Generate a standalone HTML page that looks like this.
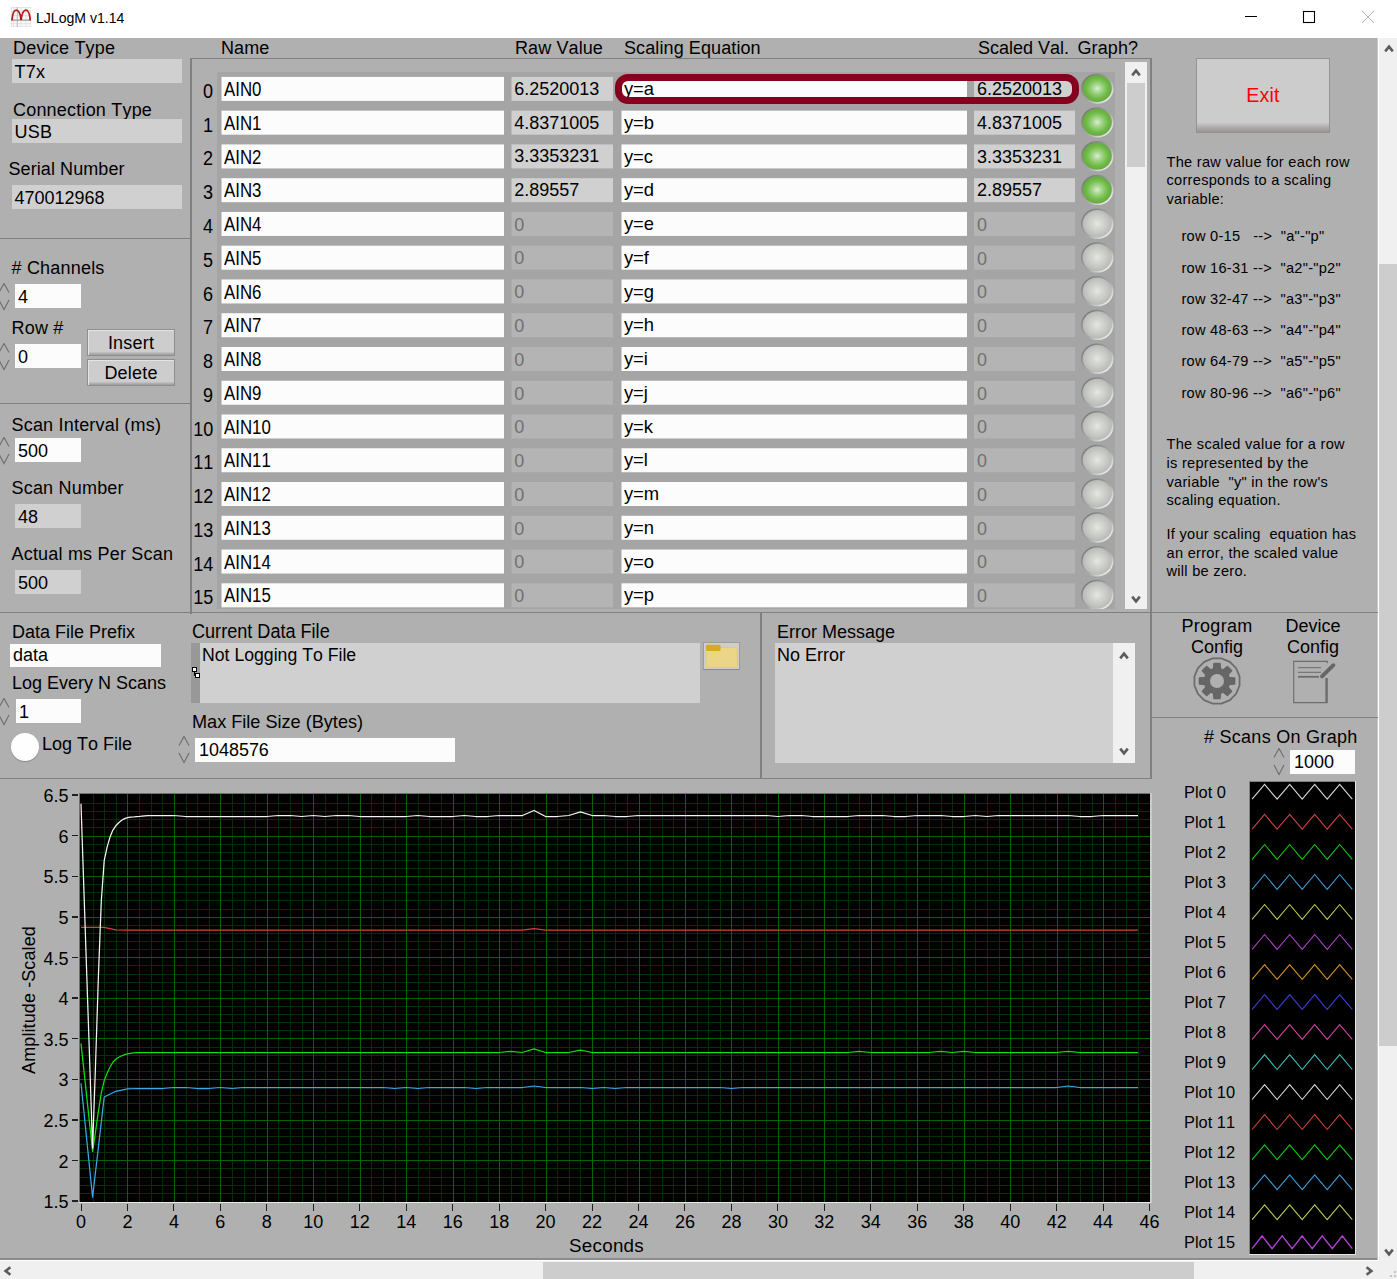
<!DOCTYPE html>
<html><head><meta charset="utf-8"><title>LJLogM v1.14</title>
<style>
html,body{margin:0;padding:0;}
body{font-kerning:none;width:1397px;height:1279px;position:relative;overflow:hidden;background:#f0f0f0;font-family:"Liberation Sans", sans-serif;}
body>div,body>svg{position:absolute;}
.t{position:absolute;}
</style></head><body>
<div style="left:0px;top:0px;width:1397px;height:38px;background:#ffffff;"></div>
<svg style="left:10.9px;top:6.8px" width="20.2" height="20.2" viewBox="0 0 20 20">
<rect x="0" y="0" width="20" height="20" fill="#f7f8f7"/>
<g stroke="#dcdcda" stroke-width="0.7"><path d="M0.4 0V20M2.7 0V20M10 0V20M14.7 0V20M19.6 0V20M0 0.5H20M0 4H20M0 8.5H20M0 16.5H20M0 19.6H20"/></g>
<path d="M6.3 0V20" stroke="#c4c4c2" stroke-width="1.2"/>
<path d="M0.3 13H19.8" stroke="#9c9c9c" stroke-width="1.3"/>
<path d="M0.9 13.2 C1.4 7.5, 3 3.2, 5.2 3.2 C7.4 3.2, 9.3 7.5, 10 12.6 C10.7 7.5, 12.6 3.2, 14.7 3.2 C16.9 3.2, 18.6 7.5, 19.1 13.2" fill="none" stroke="#b81c1c" stroke-width="1.7"/>
<path d="M10 9.5L8.9 12.9H11.1Z" fill="#a40808"/>
</svg>
<div class="t" style="top:10.15px;font-size:15.3px;line-height:15.3px;color:#000;white-space:pre;left:36.3px;transform:scaleX(0.92);transform-origin:0 0;">LJLogM v1.14</div>
<svg style="left:1240px;top:0" width="157" height="38" viewBox="0 0 157 38">
<path d="M5 16.5H17" stroke="#000" stroke-width="1"/>
<rect x="63.5" y="11.5" width="11" height="11" fill="none" stroke="#000" stroke-width="1.1"/>
<path d="M122 11L134 23M134 11L122 23" stroke="#b4b4b4" stroke-width="1"/>
</svg>
<div style="left:0px;top:38px;width:1378px;height:1221px;background:#b0b0b0;"></div>
<div style="left:0px;top:1258px;width:1379px;height:2px;background:#8c8c8c;"></div>
<div style="left:0px;top:1260px;width:1379px;height:1px;background:#ffffff;"></div>
<div style="left:1377px;top:38px;width:1px;height:1222px;background:#c8c8c8;"></div>
<div style="left:1378px;top:38px;width:1px;height:1222px;background:#ffffff;"></div>
<div style="left:1379px;top:38px;width:18px;height:1223px;background:#f0f0f0;"></div>
<div style="left:0px;top:1261px;width:1397px;height:18px;background:#f0f0f0;"></div>
<div style="left:1379px;top:264.3px;width:18px;height:781.5px;background:#cdcdcd;"></div>
<div style="left:543px;top:1262px;width:651px;height:17px;background:#cdcdcd;"></div>
<svg style="left:1381.2px;top:1265.8px" width="17" height="17"><g fill="#c4c4c4"><rect x="13" y="5" width="2" height="2"/><rect x="9" y="9" width="2" height="2"/><rect x="13" y="9" width="2" height="2"/><rect x="5" y="13" width="2" height="2"/><rect x="9" y="13" width="2" height="2"/><rect x="13" y="13" width="2" height="2"/></g></svg>
<div class="t" style="top:38.96px;font-size:18px;line-height:18px;color:#000;white-space:pre;left:13px;letter-spacing:0.200px;">Device Type</div>
<div style="left:12px;top:59px;width:170px;height:24px;background:#d0d0d0;"></div>
<div class="t" style="top:62.96px;font-size:18px;line-height:18px;color:#000;white-space:pre;left:14.5px;letter-spacing:0.200px;">T7x</div>
<div class="t" style="top:101.06px;font-size:18px;line-height:18px;color:#000;white-space:pre;left:13px;letter-spacing:0.200px;">Connection Type</div>
<div style="left:12px;top:119px;width:170px;height:24px;background:#d0d0d0;"></div>
<div class="t" style="top:122.66px;font-size:18px;line-height:18px;color:#000;white-space:pre;left:14.5px;letter-spacing:0.200px;">USB</div>
<div class="t" style="top:160.46px;font-size:18px;line-height:18px;color:#000;white-space:pre;left:8.5px;letter-spacing:0.080px;">Serial Number</div>
<div style="left:12px;top:185px;width:170px;height:24px;background:#d0d0d0;"></div>
<div class="t" style="top:188.76px;font-size:18px;line-height:18px;color:#000;white-space:pre;left:14.5px;">470012968</div>
<div style="left:0px;top:237.9px;width:191px;height:1.5px;background:#808080;"></div>
<div class="t" style="top:259.36px;font-size:18px;line-height:18px;color:#000;white-space:pre;left:11.5px;letter-spacing:0.200px;"># Channels</div>
<svg style="left:-2px;top:283px" width="12" height="28" viewBox="0 0 12 28"><path d="M1 9.4L6.0 0.4L11 9.4M1 17.1L6.0 26.5L11 17.1" fill="none" stroke="#6e6e6e" stroke-width="1.1"/></svg>
<div style="left:15px;top:284px;width:66px;height:24px;background:#fcfcfc;"></div>
<div class="t" style="top:288.36px;font-size:18px;line-height:18px;color:#000;white-space:pre;left:18px;">4</div>
<div class="t" style="top:319.36px;font-size:18px;line-height:18px;color:#000;white-space:pre;left:11.5px;letter-spacing:0.200px;">Row #</div>
<svg style="left:-2px;top:343px" width="12" height="28" viewBox="0 0 12 28"><path d="M1 9.4L6.0 0.4L11 9.4M1 17.1L6.0 26.5L11 17.1" fill="none" stroke="#6e6e6e" stroke-width="1.1"/></svg>
<div style="left:15px;top:344px;width:66px;height:24px;background:#fcfcfc;"></div>
<div class="t" style="top:348.36px;font-size:18px;line-height:18px;color:#000;white-space:pre;left:18px;">0</div>
<div style="left:87px;top:328.5px;width:88px;height:27.5px;box-sizing:border-box;border:1px solid #8e8e8e;background:linear-gradient(#cdcdcd 0%,#cdcdcd 86%,#9a9a9a 100%);box-shadow:inset 1px 1px 0 #e4e4e4;"></div>
<div class="t" style="top:334.36px;font-size:18px;line-height:18px;color:#000;white-space:pre;left:-69.0px;width:400px;text-align:center;letter-spacing:0.200px;">Insert</div>
<div style="left:87px;top:358.8px;width:88px;height:27.3px;box-sizing:border-box;border:1px solid #8e8e8e;background:linear-gradient(#cdcdcd 0%,#cdcdcd 86%,#9a9a9a 100%);box-shadow:inset 1px 1px 0 #e4e4e4;"></div>
<div class="t" style="top:364.36px;font-size:18px;line-height:18px;color:#000;white-space:pre;left:-69.0px;width:400px;text-align:center;letter-spacing:0.200px;">Delete</div>
<div style="left:0px;top:402.9px;width:191px;height:1.5px;background:#808080;"></div>
<div class="t" style="top:416.36px;font-size:18px;line-height:18px;color:#000;white-space:pre;left:11.5px;letter-spacing:0.200px;">Scan Interval (ms)</div>
<svg style="left:-2px;top:437px" width="12" height="28" viewBox="0 0 12 28"><path d="M1 9.4L6.0 0.4L11 9.4M1 17.1L6.0 26.5L11 17.1" fill="none" stroke="#6e6e6e" stroke-width="1.1"/></svg>
<div style="left:15px;top:438px;width:66px;height:24px;background:#fcfcfc;"></div>
<div class="t" style="top:442.36px;font-size:18px;line-height:18px;color:#000;white-space:pre;left:18px;">500</div>
<div class="t" style="top:479.36px;font-size:18px;line-height:18px;color:#000;white-space:pre;left:11.5px;letter-spacing:0.200px;">Scan Number</div>
<div style="left:15px;top:504px;width:66px;height:24px;background:#d0d0d0;"></div>
<div class="t" style="top:508.36px;font-size:18px;line-height:18px;color:#000;white-space:pre;left:18px;">48</div>
<div class="t" style="top:545.36px;font-size:18px;line-height:18px;color:#000;white-space:pre;left:11.5px;letter-spacing:0.200px;">Actual ms Per Scan</div>
<div style="left:15px;top:570px;width:66px;height:24px;background:#d0d0d0;"></div>
<div class="t" style="top:574.36px;font-size:18px;line-height:18px;color:#000;white-space:pre;left:18px;">500</div>
<div class="t" style="top:38.96px;font-size:18px;line-height:18px;color:#000;white-space:pre;left:221px;letter-spacing:0.100px;">Name</div>
<div class="t" style="top:38.96px;font-size:18px;line-height:18px;color:#000;white-space:pre;left:515px;letter-spacing:0.100px;">Raw Value</div>
<div class="t" style="top:38.96px;font-size:18px;line-height:18px;color:#000;white-space:pre;left:624px;letter-spacing:0.100px;">Scaling Equation</div>
<div class="t" style="top:38.96px;font-size:18px;line-height:18px;color:#000;white-space:pre;left:978px;">Scaled Val.</div>
<div class="t" style="top:38.96px;font-size:18px;line-height:18px;color:#000;white-space:pre;left:1077.5px;letter-spacing:0.100px;">Graph?</div>
<div style="left:190.2px;top:58px;width:1.5px;height:556px;background:#808080;"></div>
<div style="left:190.2px;top:57.9px;width:961px;height:1.4px;background:#808080;"></div>
<div style="left:1150px;top:58px;width:1.9px;height:556px;background:#808080;"></div>
<div style="left:217px;top:72px;width:898px;height:540px;background:#a5a5a5;"></div>
<div class="t" style="top:80.97px;font-size:20px;line-height:20px;color:#000;white-space:pre;right:1184px;transform:scaleX(0.9);transform-origin:100% 0;">0</div>
<svg style="left:221px;top:76px" width="283" height="25"><rect x="0.50" y="0.90" width="282.50" height="24.00" fill="#fcfcfc"/></svg>
<div class="t" style="top:80.06px;font-size:19.3px;line-height:19.3px;color:#000;white-space:pre;left:224px;transform:scaleX(0.872);transform-origin:0 0;">AIN0</div>
<svg style="left:511px;top:76px" width="102" height="25"><rect x="0.50" y="0.90" width="101.50" height="24.00" fill="#d0d0d0"/></svg>
<div class="t" style="top:79.76px;font-size:18px;line-height:18px;color:#000;white-space:pre;left:514.3px;">6.2520013</div>
<svg style="left:621px;top:76px" width="346" height="25"><rect x="0.50" y="0.90" width="345.50" height="24.00" fill="#fcfcfc"/></svg>
<div class="t" style="top:80.02px;font-size:18.4px;line-height:18.4px;color:#000;white-space:pre;left:623.9px;">y=a</div>
<svg style="left:974px;top:76px" width="101" height="25"><rect x="0.00" y="0.90" width="101.00" height="24.00" fill="#d0d0d0"/></svg>
<div class="t" style="top:80.06px;font-size:18px;line-height:18px;color:#000;white-space:pre;left:977px;">6.2520013</div>
<div class="t" style="top:114.73px;font-size:20px;line-height:20px;color:#000;white-space:pre;right:1184px;transform:scaleX(0.9);transform-origin:100% 0;">1</div>
<svg style="left:221px;top:110px" width="283" height="25"><rect x="0.50" y="0.66" width="282.50" height="24.00" fill="#fcfcfc"/></svg>
<div class="t" style="top:113.82px;font-size:19.3px;line-height:19.3px;color:#000;white-space:pre;left:224px;transform:scaleX(0.872);transform-origin:0 0;">AIN1</div>
<svg style="left:511px;top:110px" width="102" height="25"><rect x="0.50" y="0.66" width="101.50" height="24.00" fill="#d0d0d0"/></svg>
<div class="t" style="top:113.52px;font-size:18px;line-height:18px;color:#000;white-space:pre;left:514.3px;">4.8371005</div>
<svg style="left:621px;top:110px" width="346" height="25"><rect x="0.50" y="0.66" width="345.50" height="24.00" fill="#fcfcfc"/></svg>
<div class="t" style="top:113.78px;font-size:18.4px;line-height:18.4px;color:#000;white-space:pre;left:623.9px;">y=b</div>
<svg style="left:974px;top:110px" width="101" height="25"><rect x="0.00" y="0.66" width="101.00" height="24.00" fill="#d0d0d0"/></svg>
<div class="t" style="top:113.82px;font-size:18px;line-height:18px;color:#000;white-space:pre;left:977px;">4.8371005</div>
<div class="t" style="top:148.49px;font-size:20px;line-height:20px;color:#000;white-space:pre;right:1184px;transform:scaleX(0.9);transform-origin:100% 0;">2</div>
<svg style="left:221px;top:144px" width="283" height="25"><rect x="0.50" y="0.42" width="282.50" height="24.00" fill="#fcfcfc"/></svg>
<div class="t" style="top:147.58px;font-size:19.3px;line-height:19.3px;color:#000;white-space:pre;left:224px;transform:scaleX(0.872);transform-origin:0 0;">AIN2</div>
<svg style="left:511px;top:144px" width="102" height="25"><rect x="0.50" y="0.42" width="101.50" height="24.00" fill="#d0d0d0"/></svg>
<div class="t" style="top:147.28px;font-size:18px;line-height:18px;color:#000;white-space:pre;left:514.3px;">3.3353231</div>
<svg style="left:621px;top:144px" width="346" height="25"><rect x="0.50" y="0.42" width="345.50" height="24.00" fill="#fcfcfc"/></svg>
<div class="t" style="top:147.54px;font-size:18.4px;line-height:18.4px;color:#000;white-space:pre;left:623.9px;">y=c</div>
<svg style="left:974px;top:144px" width="101" height="25"><rect x="0.00" y="0.42" width="101.00" height="24.00" fill="#d0d0d0"/></svg>
<div class="t" style="top:147.58px;font-size:18px;line-height:18px;color:#000;white-space:pre;left:977px;">3.3353231</div>
<div class="t" style="top:182.25px;font-size:20px;line-height:20px;color:#000;white-space:pre;right:1184px;transform:scaleX(0.9);transform-origin:100% 0;">3</div>
<svg style="left:221px;top:178px" width="283" height="25"><rect x="0.50" y="0.18" width="282.50" height="24.00" fill="#fcfcfc"/></svg>
<div class="t" style="top:181.34px;font-size:19.3px;line-height:19.3px;color:#000;white-space:pre;left:224px;transform:scaleX(0.872);transform-origin:0 0;">AIN3</div>
<svg style="left:511px;top:178px" width="102" height="25"><rect x="0.50" y="0.18" width="101.50" height="24.00" fill="#d0d0d0"/></svg>
<div class="t" style="top:181.04px;font-size:18px;line-height:18px;color:#000;white-space:pre;left:514.3px;">2.89557</div>
<svg style="left:621px;top:178px" width="346" height="25"><rect x="0.50" y="0.18" width="345.50" height="24.00" fill="#fcfcfc"/></svg>
<div class="t" style="top:181.30px;font-size:18.4px;line-height:18.4px;color:#000;white-space:pre;left:623.9px;">y=d</div>
<svg style="left:974px;top:178px" width="101" height="25"><rect x="0.00" y="0.18" width="101.00" height="24.00" fill="#d0d0d0"/></svg>
<div class="t" style="top:181.34px;font-size:18px;line-height:18px;color:#000;white-space:pre;left:977px;">2.89557</div>
<div class="t" style="top:216.01px;font-size:20px;line-height:20px;color:#000;white-space:pre;right:1184px;transform:scaleX(0.9);transform-origin:100% 0;">4</div>
<svg style="left:221px;top:211px" width="283" height="25"><rect x="0.50" y="0.94" width="282.50" height="24.00" fill="#fcfcfc"/></svg>
<div class="t" style="top:215.10px;font-size:19.3px;line-height:19.3px;color:#000;white-space:pre;left:224px;transform:scaleX(0.872);transform-origin:0 0;">AIN4</div>
<svg style="left:511px;top:211px" width="102" height="25"><rect x="0.50" y="0.94" width="101.50" height="24.00" fill="#b4b4b4"/></svg>
<div class="t" style="top:215.70px;font-size:18px;line-height:18px;color:#707070;white-space:pre;left:514.3px;">0</div>
<svg style="left:621px;top:211px" width="346" height="25"><rect x="0.50" y="0.94" width="345.50" height="24.00" fill="#fcfcfc"/></svg>
<div class="t" style="top:215.06px;font-size:18.4px;line-height:18.4px;color:#000;white-space:pre;left:623.9px;">y=e</div>
<svg style="left:974px;top:211px" width="101" height="25"><rect x="0.00" y="0.94" width="101.00" height="24.00" fill="#b4b4b4"/></svg>
<div class="t" style="top:215.80px;font-size:18px;line-height:18px;color:#707070;white-space:pre;left:977px;">0</div>
<div class="t" style="top:249.77px;font-size:20px;line-height:20px;color:#000;white-space:pre;right:1184px;transform:scaleX(0.9);transform-origin:100% 0;">5</div>
<svg style="left:221px;top:245px" width="283" height="25"><rect x="0.50" y="0.70" width="282.50" height="24.00" fill="#fcfcfc"/></svg>
<div class="t" style="top:248.86px;font-size:19.3px;line-height:19.3px;color:#000;white-space:pre;left:224px;transform:scaleX(0.872);transform-origin:0 0;">AIN5</div>
<svg style="left:511px;top:245px" width="102" height="25"><rect x="0.50" y="0.70" width="101.50" height="24.00" fill="#b4b4b4"/></svg>
<div class="t" style="top:249.46px;font-size:18px;line-height:18px;color:#707070;white-space:pre;left:514.3px;">0</div>
<svg style="left:621px;top:245px" width="346" height="25"><rect x="0.50" y="0.70" width="345.50" height="24.00" fill="#fcfcfc"/></svg>
<div class="t" style="top:248.82px;font-size:18.4px;line-height:18.4px;color:#000;white-space:pre;left:623.9px;">y=f</div>
<svg style="left:974px;top:245px" width="101" height="25"><rect x="0.00" y="0.70" width="101.00" height="24.00" fill="#b4b4b4"/></svg>
<div class="t" style="top:249.56px;font-size:18px;line-height:18px;color:#707070;white-space:pre;left:977px;">0</div>
<div class="t" style="top:283.53px;font-size:20px;line-height:20px;color:#000;white-space:pre;right:1184px;transform:scaleX(0.9);transform-origin:100% 0;">6</div>
<svg style="left:221px;top:279px" width="283" height="25"><rect x="0.50" y="0.46" width="282.50" height="24.00" fill="#fcfcfc"/></svg>
<div class="t" style="top:282.62px;font-size:19.3px;line-height:19.3px;color:#000;white-space:pre;left:224px;transform:scaleX(0.872);transform-origin:0 0;">AIN6</div>
<svg style="left:511px;top:279px" width="102" height="25"><rect x="0.50" y="0.46" width="101.50" height="24.00" fill="#b4b4b4"/></svg>
<div class="t" style="top:283.22px;font-size:18px;line-height:18px;color:#707070;white-space:pre;left:514.3px;">0</div>
<svg style="left:621px;top:279px" width="346" height="25"><rect x="0.50" y="0.46" width="345.50" height="24.00" fill="#fcfcfc"/></svg>
<div class="t" style="top:282.58px;font-size:18.4px;line-height:18.4px;color:#000;white-space:pre;left:623.9px;">y=g</div>
<svg style="left:974px;top:279px" width="101" height="25"><rect x="0.00" y="0.46" width="101.00" height="24.00" fill="#b4b4b4"/></svg>
<div class="t" style="top:283.32px;font-size:18px;line-height:18px;color:#707070;white-space:pre;left:977px;">0</div>
<div class="t" style="top:317.29px;font-size:20px;line-height:20px;color:#000;white-space:pre;right:1184px;transform:scaleX(0.9);transform-origin:100% 0;">7</div>
<svg style="left:221px;top:313px" width="283" height="25"><rect x="0.50" y="0.22" width="282.50" height="24.00" fill="#fcfcfc"/></svg>
<div class="t" style="top:316.38px;font-size:19.3px;line-height:19.3px;color:#000;white-space:pre;left:224px;transform:scaleX(0.872);transform-origin:0 0;">AIN7</div>
<svg style="left:511px;top:313px" width="102" height="25"><rect x="0.50" y="0.22" width="101.50" height="24.00" fill="#b4b4b4"/></svg>
<div class="t" style="top:316.98px;font-size:18px;line-height:18px;color:#707070;white-space:pre;left:514.3px;">0</div>
<svg style="left:621px;top:313px" width="346" height="25"><rect x="0.50" y="0.22" width="345.50" height="24.00" fill="#fcfcfc"/></svg>
<div class="t" style="top:316.34px;font-size:18.4px;line-height:18.4px;color:#000;white-space:pre;left:623.9px;">y=h</div>
<svg style="left:974px;top:313px" width="101" height="25"><rect x="0.00" y="0.22" width="101.00" height="24.00" fill="#b4b4b4"/></svg>
<div class="t" style="top:317.08px;font-size:18px;line-height:18px;color:#707070;white-space:pre;left:977px;">0</div>
<div class="t" style="top:351.05px;font-size:20px;line-height:20px;color:#000;white-space:pre;right:1184px;transform:scaleX(0.9);transform-origin:100% 0;">8</div>
<svg style="left:221px;top:346px" width="283" height="25"><rect x="0.50" y="0.98" width="282.50" height="24.00" fill="#fcfcfc"/></svg>
<div class="t" style="top:350.14px;font-size:19.3px;line-height:19.3px;color:#000;white-space:pre;left:224px;transform:scaleX(0.872);transform-origin:0 0;">AIN8</div>
<svg style="left:511px;top:346px" width="102" height="25"><rect x="0.50" y="0.98" width="101.50" height="24.00" fill="#b4b4b4"/></svg>
<div class="t" style="top:350.74px;font-size:18px;line-height:18px;color:#707070;white-space:pre;left:514.3px;">0</div>
<svg style="left:621px;top:346px" width="346" height="25"><rect x="0.50" y="0.98" width="345.50" height="24.00" fill="#fcfcfc"/></svg>
<div class="t" style="top:350.10px;font-size:18.4px;line-height:18.4px;color:#000;white-space:pre;left:623.9px;">y=i</div>
<svg style="left:974px;top:346px" width="101" height="25"><rect x="0.00" y="0.98" width="101.00" height="24.00" fill="#b4b4b4"/></svg>
<div class="t" style="top:350.84px;font-size:18px;line-height:18px;color:#707070;white-space:pre;left:977px;">0</div>
<div class="t" style="top:384.81px;font-size:20px;line-height:20px;color:#000;white-space:pre;right:1184px;transform:scaleX(0.9);transform-origin:100% 0;">9</div>
<svg style="left:221px;top:380px" width="283" height="25"><rect x="0.50" y="0.74" width="282.50" height="24.00" fill="#fcfcfc"/></svg>
<div class="t" style="top:383.90px;font-size:19.3px;line-height:19.3px;color:#000;white-space:pre;left:224px;transform:scaleX(0.872);transform-origin:0 0;">AIN9</div>
<svg style="left:511px;top:380px" width="102" height="25"><rect x="0.50" y="0.74" width="101.50" height="24.00" fill="#b4b4b4"/></svg>
<div class="t" style="top:384.50px;font-size:18px;line-height:18px;color:#707070;white-space:pre;left:514.3px;">0</div>
<svg style="left:621px;top:380px" width="346" height="25"><rect x="0.50" y="0.74" width="345.50" height="24.00" fill="#fcfcfc"/></svg>
<div class="t" style="top:383.86px;font-size:18.4px;line-height:18.4px;color:#000;white-space:pre;left:623.9px;">y=j</div>
<svg style="left:974px;top:380px" width="101" height="25"><rect x="0.00" y="0.74" width="101.00" height="24.00" fill="#b4b4b4"/></svg>
<div class="t" style="top:384.60px;font-size:18px;line-height:18px;color:#707070;white-space:pre;left:977px;">0</div>
<div class="t" style="top:418.57px;font-size:20px;line-height:20px;color:#000;white-space:pre;right:1184px;transform:scaleX(0.9);transform-origin:100% 0;">10</div>
<svg style="left:221px;top:414px" width="283" height="25"><rect x="0.50" y="0.50" width="282.50" height="24.00" fill="#fcfcfc"/></svg>
<div class="t" style="top:417.66px;font-size:19.3px;line-height:19.3px;color:#000;white-space:pre;left:224px;transform:scaleX(0.872);transform-origin:0 0;">AIN10</div>
<svg style="left:511px;top:414px" width="102" height="25"><rect x="0.50" y="0.50" width="101.50" height="24.00" fill="#b4b4b4"/></svg>
<div class="t" style="top:418.26px;font-size:18px;line-height:18px;color:#707070;white-space:pre;left:514.3px;">0</div>
<svg style="left:621px;top:414px" width="346" height="25"><rect x="0.50" y="0.50" width="345.50" height="24.00" fill="#fcfcfc"/></svg>
<div class="t" style="top:417.62px;font-size:18.4px;line-height:18.4px;color:#000;white-space:pre;left:623.9px;">y=k</div>
<svg style="left:974px;top:414px" width="101" height="25"><rect x="0.00" y="0.50" width="101.00" height="24.00" fill="#b4b4b4"/></svg>
<div class="t" style="top:418.36px;font-size:18px;line-height:18px;color:#707070;white-space:pre;left:977px;">0</div>
<div class="t" style="top:452.33px;font-size:20px;line-height:20px;color:#000;white-space:pre;right:1184px;transform:scaleX(0.9);transform-origin:100% 0;">11</div>
<svg style="left:221px;top:448px" width="283" height="25"><rect x="0.50" y="0.26" width="282.50" height="24.00" fill="#fcfcfc"/></svg>
<div class="t" style="top:451.42px;font-size:19.3px;line-height:19.3px;color:#000;white-space:pre;left:224px;transform:scaleX(0.872);transform-origin:0 0;">AIN11</div>
<svg style="left:511px;top:448px" width="102" height="25"><rect x="0.50" y="0.26" width="101.50" height="24.00" fill="#b4b4b4"/></svg>
<div class="t" style="top:452.02px;font-size:18px;line-height:18px;color:#707070;white-space:pre;left:514.3px;">0</div>
<svg style="left:621px;top:448px" width="346" height="25"><rect x="0.50" y="0.26" width="345.50" height="24.00" fill="#fcfcfc"/></svg>
<div class="t" style="top:451.38px;font-size:18.4px;line-height:18.4px;color:#000;white-space:pre;left:623.9px;">y=l</div>
<svg style="left:974px;top:448px" width="101" height="25"><rect x="0.00" y="0.26" width="101.00" height="24.00" fill="#b4b4b4"/></svg>
<div class="t" style="top:452.12px;font-size:18px;line-height:18px;color:#707070;white-space:pre;left:977px;">0</div>
<div class="t" style="top:486.09px;font-size:20px;line-height:20px;color:#000;white-space:pre;right:1184px;transform:scaleX(0.9);transform-origin:100% 0;">12</div>
<svg style="left:221px;top:482px" width="283" height="25"><rect x="0.50" y="0.02" width="282.50" height="24.00" fill="#fcfcfc"/></svg>
<div class="t" style="top:485.18px;font-size:19.3px;line-height:19.3px;color:#000;white-space:pre;left:224px;transform:scaleX(0.872);transform-origin:0 0;">AIN12</div>
<svg style="left:511px;top:482px" width="102" height="25"><rect x="0.50" y="0.02" width="101.50" height="24.00" fill="#b4b4b4"/></svg>
<div class="t" style="top:485.78px;font-size:18px;line-height:18px;color:#707070;white-space:pre;left:514.3px;">0</div>
<svg style="left:621px;top:482px" width="346" height="25"><rect x="0.50" y="0.02" width="345.50" height="24.00" fill="#fcfcfc"/></svg>
<div class="t" style="top:485.14px;font-size:18.4px;line-height:18.4px;color:#000;white-space:pre;left:623.9px;">y=m</div>
<svg style="left:974px;top:482px" width="101" height="25"><rect x="0.00" y="0.02" width="101.00" height="24.00" fill="#b4b4b4"/></svg>
<div class="t" style="top:485.88px;font-size:18px;line-height:18px;color:#707070;white-space:pre;left:977px;">0</div>
<div class="t" style="top:519.85px;font-size:20px;line-height:20px;color:#000;white-space:pre;right:1184px;transform:scaleX(0.9);transform-origin:100% 0;">13</div>
<svg style="left:221px;top:515px" width="283" height="25"><rect x="0.50" y="0.78" width="282.50" height="24.00" fill="#fcfcfc"/></svg>
<div class="t" style="top:518.94px;font-size:19.3px;line-height:19.3px;color:#000;white-space:pre;left:224px;transform:scaleX(0.872);transform-origin:0 0;">AIN13</div>
<svg style="left:511px;top:515px" width="102" height="25"><rect x="0.50" y="0.78" width="101.50" height="24.00" fill="#b4b4b4"/></svg>
<div class="t" style="top:519.54px;font-size:18px;line-height:18px;color:#707070;white-space:pre;left:514.3px;">0</div>
<svg style="left:621px;top:515px" width="346" height="25"><rect x="0.50" y="0.78" width="345.50" height="24.00" fill="#fcfcfc"/></svg>
<div class="t" style="top:518.90px;font-size:18.4px;line-height:18.4px;color:#000;white-space:pre;left:623.9px;">y=n</div>
<svg style="left:974px;top:515px" width="101" height="25"><rect x="0.00" y="0.78" width="101.00" height="24.00" fill="#b4b4b4"/></svg>
<div class="t" style="top:519.64px;font-size:18px;line-height:18px;color:#707070;white-space:pre;left:977px;">0</div>
<div class="t" style="top:553.61px;font-size:20px;line-height:20px;color:#000;white-space:pre;right:1184px;transform:scaleX(0.9);transform-origin:100% 0;">14</div>
<svg style="left:221px;top:549px" width="283" height="25"><rect x="0.50" y="0.54" width="282.50" height="24.00" fill="#fcfcfc"/></svg>
<div class="t" style="top:552.70px;font-size:19.3px;line-height:19.3px;color:#000;white-space:pre;left:224px;transform:scaleX(0.872);transform-origin:0 0;">AIN14</div>
<svg style="left:511px;top:549px" width="102" height="25"><rect x="0.50" y="0.54" width="101.50" height="24.00" fill="#b4b4b4"/></svg>
<div class="t" style="top:553.30px;font-size:18px;line-height:18px;color:#707070;white-space:pre;left:514.3px;">0</div>
<svg style="left:621px;top:549px" width="346" height="25"><rect x="0.50" y="0.54" width="345.50" height="24.00" fill="#fcfcfc"/></svg>
<div class="t" style="top:552.66px;font-size:18.4px;line-height:18.4px;color:#000;white-space:pre;left:623.9px;">y=o</div>
<svg style="left:974px;top:549px" width="101" height="25"><rect x="0.00" y="0.54" width="101.00" height="24.00" fill="#b4b4b4"/></svg>
<div class="t" style="top:553.40px;font-size:18px;line-height:18px;color:#707070;white-space:pre;left:977px;">0</div>
<div class="t" style="top:587.37px;font-size:20px;line-height:20px;color:#000;white-space:pre;right:1184px;transform:scaleX(0.9);transform-origin:100% 0;">15</div>
<svg style="left:221px;top:583px" width="283" height="25"><rect x="0.50" y="0.30" width="282.50" height="24.00" fill="#fcfcfc"/></svg>
<div class="t" style="top:586.46px;font-size:19.3px;line-height:19.3px;color:#000;white-space:pre;left:224px;transform:scaleX(0.872);transform-origin:0 0;">AIN15</div>
<svg style="left:511px;top:583px" width="102" height="25"><rect x="0.50" y="0.30" width="101.50" height="24.00" fill="#b4b4b4"/></svg>
<div class="t" style="top:587.06px;font-size:18px;line-height:18px;color:#707070;white-space:pre;left:514.3px;">0</div>
<svg style="left:621px;top:583px" width="346" height="25"><rect x="0.50" y="0.30" width="345.50" height="24.00" fill="#fcfcfc"/></svg>
<div class="t" style="top:586.42px;font-size:18.4px;line-height:18.4px;color:#000;white-space:pre;left:623.9px;">y=p</div>
<svg style="left:974px;top:583px" width="101" height="25"><rect x="0.00" y="0.30" width="101.00" height="24.00" fill="#b4b4b4"/></svg>
<div class="t" style="top:587.16px;font-size:18px;line-height:18px;color:#707070;white-space:pre;left:977px;">0</div>
<svg style="left:1078px;top:60px" width="40" height="552" viewBox="1078 60 40 552"><defs><radialGradient id="gOn" cx="50%" cy="50%" r="50%"><stop offset="0" stop-color="#dcefd4"/><stop offset="0.22" stop-color="#b4dca0"/><stop offset="0.48" stop-color="#8ccc6c"/><stop offset="0.75" stop-color="#70b848"/><stop offset="1" stop-color="#64ac3c"/></radialGradient><radialGradient id="gOff" cx="50%" cy="50%" r="50%"><stop offset="0" stop-color="#e6e8e4"/><stop offset="0.3" stop-color="#d6d8d4"/><stop offset="0.65" stop-color="#c8cac6"/><stop offset="1" stop-color="#b8bab6"/></radialGradient><linearGradient id="gRim" x1="0" y1="0" x2="1" y2="1"><stop offset="0.12" stop-color="#787878"/><stop offset="0.45" stop-color="#a0a0a0"/><stop offset="0.56" stop-color="#a8a8a8"/><stop offset="0.88" stop-color="#f0f0f0"/></linearGradient></defs><ellipse cx="1097.3" cy="88.60" rx="16.2" ry="15.2" fill="url(#gRim)"/><ellipse cx="1097.2" cy="88.50" rx="14.6" ry="13.6" fill="url(#gOn)"/><ellipse cx="1097.3" cy="122.36" rx="16.2" ry="15.2" fill="url(#gRim)"/><ellipse cx="1097.2" cy="122.26" rx="14.6" ry="13.6" fill="url(#gOn)"/><ellipse cx="1097.3" cy="156.12" rx="16.2" ry="15.2" fill="url(#gRim)"/><ellipse cx="1097.2" cy="156.02" rx="14.6" ry="13.6" fill="url(#gOn)"/><ellipse cx="1097.3" cy="189.88" rx="16.2" ry="15.2" fill="url(#gRim)"/><ellipse cx="1097.2" cy="189.78" rx="14.6" ry="13.6" fill="url(#gOn)"/><ellipse cx="1097.3" cy="223.64" rx="16.2" ry="15.2" fill="url(#gRim)"/><ellipse cx="1097.2" cy="223.54" rx="14.6" ry="13.6" fill="url(#gOff)"/><ellipse cx="1097.3" cy="257.40" rx="16.2" ry="15.2" fill="url(#gRim)"/><ellipse cx="1097.2" cy="257.30" rx="14.6" ry="13.6" fill="url(#gOff)"/><ellipse cx="1097.3" cy="291.16" rx="16.2" ry="15.2" fill="url(#gRim)"/><ellipse cx="1097.2" cy="291.06" rx="14.6" ry="13.6" fill="url(#gOff)"/><ellipse cx="1097.3" cy="324.92" rx="16.2" ry="15.2" fill="url(#gRim)"/><ellipse cx="1097.2" cy="324.82" rx="14.6" ry="13.6" fill="url(#gOff)"/><ellipse cx="1097.3" cy="358.68" rx="16.2" ry="15.2" fill="url(#gRim)"/><ellipse cx="1097.2" cy="358.58" rx="14.6" ry="13.6" fill="url(#gOff)"/><ellipse cx="1097.3" cy="392.44" rx="16.2" ry="15.2" fill="url(#gRim)"/><ellipse cx="1097.2" cy="392.34" rx="14.6" ry="13.6" fill="url(#gOff)"/><ellipse cx="1097.3" cy="426.20" rx="16.2" ry="15.2" fill="url(#gRim)"/><ellipse cx="1097.2" cy="426.10" rx="14.6" ry="13.6" fill="url(#gOff)"/><ellipse cx="1097.3" cy="459.96" rx="16.2" ry="15.2" fill="url(#gRim)"/><ellipse cx="1097.2" cy="459.86" rx="14.6" ry="13.6" fill="url(#gOff)"/><ellipse cx="1097.3" cy="493.72" rx="16.2" ry="15.2" fill="url(#gRim)"/><ellipse cx="1097.2" cy="493.62" rx="14.6" ry="13.6" fill="url(#gOff)"/><ellipse cx="1097.3" cy="527.48" rx="16.2" ry="15.2" fill="url(#gRim)"/><ellipse cx="1097.2" cy="527.38" rx="14.6" ry="13.6" fill="url(#gOff)"/><ellipse cx="1097.3" cy="561.24" rx="16.2" ry="15.2" fill="url(#gRim)"/><ellipse cx="1097.2" cy="561.14" rx="14.6" ry="13.6" fill="url(#gOff)"/><ellipse cx="1097.3" cy="595.00" rx="16.2" ry="15.2" fill="url(#gRim)"/><ellipse cx="1097.2" cy="594.90" rx="14.6" ry="13.6" fill="url(#gOff)"/></svg>
<div style="left:615px;top:74px;width:464px;height:30px;box-sizing:border-box;border:7px solid #85001f;border-radius:13px;"></div>
<div style="left:192px;top:609px;width:958px;height:3px;background:#b0b0b0;"></div>
<div style="left:1125px;top:62px;width:22px;height:547px;background:#f0f0f0;"></div>
<div style="left:1127px;top:83px;width:18px;height:84px;background:#cdcdcd;"></div>
<svg style="left:1127.8px;top:64.8px" width="16" height="16"><path d="M4.2 10.4L8 5.6L11.8 10.4" fill="none" stroke="#5c5c5c" stroke-width="2.6"/></svg>
<svg style="left:1127.8px;top:591.1px" width="16" height="16"><path d="M4.2 5.6L8 10.4L11.8 5.6" fill="none" stroke="#5c5c5c" stroke-width="2.6"/></svg>
<div style="left:1196px;top:58px;width:134px;height:75px;box-sizing:border-box;border:1px solid #939393;background:linear-gradient(#cccccc 0%,#cccccc 87%,#b0a9a9 94%,#9a9494 100%);"></div>
<div class="t" style="top:86.31px;font-size:19.6px;line-height:19.6px;color:#ff0000;white-space:pre;left:1063px;width:400px;text-align:center;letter-spacing:0.218px;">Exit</div>
<div class="t" style="top:154.64px;font-size:14.6px;line-height:14.6px;color:#000;white-space:pre;left:1166.5px;letter-spacing:0.280px;">The raw value for each row</div>
<div class="t" style="top:173.34px;font-size:14.6px;line-height:14.6px;color:#000;white-space:pre;left:1166.5px;letter-spacing:0.280px;">corresponds to a scaling</div>
<div class="t" style="top:192.04px;font-size:14.6px;line-height:14.6px;color:#000;white-space:pre;left:1166.5px;letter-spacing:0.280px;">variable:</div>
<div class="t" style="top:229.44px;font-size:14.6px;line-height:14.6px;color:#000;white-space:pre;left:1181.5px;letter-spacing:0.250px;">row 0-15   --&gt;  "a"-"p"</div>
<div class="t" style="top:260.69px;font-size:14.6px;line-height:14.6px;color:#000;white-space:pre;left:1181.5px;letter-spacing:0.250px;">row 16-31 --&gt;  "a2"-"p2"</div>
<div class="t" style="top:291.94px;font-size:14.6px;line-height:14.6px;color:#000;white-space:pre;left:1181.5px;letter-spacing:0.250px;">row 32-47 --&gt;  "a3"-"p3"</div>
<div class="t" style="top:323.19px;font-size:14.6px;line-height:14.6px;color:#000;white-space:pre;left:1181.5px;letter-spacing:0.250px;">row 48-63 --&gt;  "a4"-"p4"</div>
<div class="t" style="top:354.44px;font-size:14.6px;line-height:14.6px;color:#000;white-space:pre;left:1181.5px;letter-spacing:0.250px;">row 64-79 --&gt;  "a5"-"p5"</div>
<div class="t" style="top:385.69px;font-size:14.6px;line-height:14.6px;color:#000;white-space:pre;left:1181.5px;letter-spacing:0.250px;">row 80-96 --&gt;  "a6"-"p6"</div>
<div class="t" style="top:437.24px;font-size:14.6px;line-height:14.6px;color:#000;white-space:pre;left:1166.5px;letter-spacing:0.280px;">The scaled value for a row</div>
<div class="t" style="top:455.94px;font-size:14.6px;line-height:14.6px;color:#000;white-space:pre;left:1166.5px;letter-spacing:0.280px;">is represented by the</div>
<div class="t" style="top:474.64px;font-size:14.6px;line-height:14.6px;color:#000;white-space:pre;left:1166.5px;letter-spacing:0.280px;">variable  "y" in the row's</div>
<div class="t" style="top:493.34px;font-size:14.6px;line-height:14.6px;color:#000;white-space:pre;left:1166.5px;letter-spacing:0.280px;">scaling equation.</div>
<div class="t" style="top:527.04px;font-size:14.6px;line-height:14.6px;color:#000;white-space:pre;left:1166.5px;letter-spacing:0.280px;">If your scaling  equation has</div>
<div class="t" style="top:545.74px;font-size:14.6px;line-height:14.6px;color:#000;white-space:pre;left:1166.5px;letter-spacing:0.280px;">an error, the scaled value</div>
<div class="t" style="top:564.44px;font-size:14.6px;line-height:14.6px;color:#000;white-space:pre;left:1166.5px;letter-spacing:0.280px;">will be zero.</div>
<div style="left:0px;top:611.9px;width:1378px;height:1.5px;background:#808080;"></div>
<div style="left:760.1px;top:613px;width:1.8px;height:166px;background:#808080;"></div>
<div style="left:1150.1px;top:613px;width:1.8px;height:166px;background:#808080;"></div>
<div style="left:0px;top:777.9px;width:1151px;height:1.5px;background:#808080;"></div>
<div style="left:1151px;top:716.9px;width:227px;height:1.5px;background:#808080;"></div>
<div class="t" style="top:622.86px;font-size:18px;line-height:18px;color:#000;white-space:pre;left:12px;">Data File Prefix</div>
<div style="left:10px;top:643.5px;width:151px;height:23.2px;background:#fcfcfc;"></div>
<div class="t" style="top:646.36px;font-size:18px;line-height:18px;color:#000;white-space:pre;left:13px;">data</div>
<div class="t" style="top:674.36px;font-size:18px;line-height:18px;color:#000;white-space:pre;left:12px;">Log Every N Scans</div>
<svg style="left:-2px;top:698px" width="12" height="28" viewBox="0 0 12 28"><path d="M1 9.4L6.0 0.4L11 9.4M1 17.1L6.0 26.5L11 17.1" fill="none" stroke="#6e6e6e" stroke-width="1.1"/></svg>
<div style="left:16px;top:699px;width:65px;height:24px;background:#fcfcfc;"></div>
<div class="t" style="top:702.76px;font-size:18px;line-height:18px;color:#000;white-space:pre;left:19px;">1</div>
<div style="left:11px;top:733px;width:28px;height:28px;border-radius:50%;background:#fefefe;box-shadow:0 1px 1px #8a8a8a;"></div>
<div class="t" style="top:735.36px;font-size:18px;line-height:18px;color:#000;white-space:pre;left:42px;">Log To File</div>
<div class="t" style="top:621.71px;font-size:19.6px;line-height:19.6px;color:#000;white-space:pre;left:192px;transform:scaleX(0.923);transform-origin:0 0;">Current Data File</div>
<div style="left:191px;top:643px;width:9px;height:60px;background:#989898;"></div>
<div style="left:200px;top:643px;width:500px;height:60px;background:#d0d0d0;"></div>
<div class="t" style="top:645.80px;font-size:18.9px;line-height:18.9px;color:#000;white-space:pre;left:202px;transform:scaleX(0.935);transform-origin:0 0;">Not Logging To File</div>
<svg style="left:191px;top:666px" width="10" height="14"><rect x="1.5" y="1.5" width="4" height="4" fill="#fff" stroke="#000" stroke-width="1"/><rect x="4.5" y="7.5" width="4" height="4" fill="#fff" stroke="#000" stroke-width="1"/><path d="M3.5 5.5V9.5H4.5" fill="none" stroke="#000" stroke-width="1"/></svg>
<div style="left:703px;top:642px;width:37px;height:28.4px;box-sizing:border-box;border:1px solid #9c9c9c;border-bottom:1.6px solid #8a8a8a;background:#cecece;"></div>
<svg style="left:705px;top:644px" width="34" height="26"><rect x="1" y="3.4" width="31.3" height="20.2" rx="1.6" fill="#ebd688" stroke="#e2c968" stroke-width="0.8"/><rect x="1" y="0.8" width="14.6" height="6.2" rx="1.2" fill="#d4ac1c"/></svg>
<div class="t" style="top:712.12px;font-size:19px;line-height:19px;color:#000;white-space:pre;left:191.8px;transform:scaleX(0.953);transform-origin:0 0;">Max File Size (Bytes)</div>
<svg style="left:178px;top:736px" width="12" height="28" viewBox="0 0 12 28"><path d="M1 9.4L6.0 0.4L11 9.4M1 17.1L6.0 26.5L11 17.1" fill="none" stroke="#6e6e6e" stroke-width="1.1"/></svg>
<div style="left:195px;top:738px;width:260px;height:24px;background:#fcfcfc;"></div>
<div class="t" style="top:741.19px;font-size:18.8px;line-height:18.8px;color:#000;white-space:pre;left:198.8px;transform:scaleX(0.955);transform-origin:0 0;">1048576</div>
<div class="t" style="top:622.86px;font-size:18px;line-height:18px;color:#000;white-space:pre;left:777px;">Error Message</div>
<div style="left:775px;top:643px;width:345px;height:120px;background:#d0d0d0;"></div>
<div style="left:1113px;top:643px;width:22px;height:120px;background:#f0f0f0;"></div>
<div class="t" style="top:646.36px;font-size:18px;line-height:18px;color:#000;white-space:pre;left:777px;">No Error</div>
<div class="t" style="top:616.86px;font-size:18px;line-height:18px;color:#000;white-space:pre;left:1017px;width:400px;text-align:center;letter-spacing:0.250px;">Program</div>
<div class="t" style="top:637.86px;font-size:18px;line-height:18px;color:#000;white-space:pre;left:1017px;width:400px;text-align:center;">Config</div>
<div class="t" style="top:616.86px;font-size:18px;line-height:18px;color:#000;white-space:pre;left:1113px;width:400px;text-align:center;">Device</div>
<div class="t" style="top:637.86px;font-size:18px;line-height:18px;color:#000;white-space:pre;left:1113px;width:400px;text-align:center;">Config</div>
<svg style="left:1193.1px;top:657px" width="48" height="48" viewBox="0 0 48 48">
<path d="M46.56 28.49L43.12 36.78L36.78 43.12L28.49 46.56L19.51 46.56L11.22 43.12L4.88 36.78L1.44 28.49L1.44 19.51L4.88 11.22L11.22 4.88L19.51 1.44L28.49 1.44L36.78 4.88L43.12 11.22L46.56 19.51Z" fill="none" stroke="#6c6c6c" stroke-width="1.8"/>
<path d="M41.56 21.08L41.56 26.92L36.13 27.42L34.99 30.16L38.48 34.35L34.35 38.48L30.16 34.99L27.42 36.13L26.92 41.56L21.08 41.56L20.58 36.13L17.84 34.99L13.65 38.48L9.52 34.35L13.01 30.16L11.87 27.42L6.44 26.92L6.44 21.08L11.87 20.58L13.01 17.84L9.52 13.65L13.65 9.52L17.84 13.01L20.58 11.87L21.08 6.44L26.92 6.44L27.42 11.87L30.16 13.01L34.35 9.52L38.48 13.65L34.99 17.84L36.13 20.58Z" fill="#666666" stroke="#666666" stroke-width="1.6" stroke-linejoin="round"/>
<circle cx="24" cy="24" r="7" fill="#b0b0b0"/>
</svg>
<svg style="left:1290px;top:656px" width="48" height="52" viewBox="0 0 48 52">
<path d="M37.3 7.2V5.4H3.7V46.6H37.3" fill="none" stroke="#6c6c6c" stroke-width="1.1"/>
<path d="M36.6 22V47" fill="none" stroke="#6c6c6c" stroke-width="2.4"/>
<path d="M8 11.7H31M8 16.3H31" stroke="#6a6a6a" stroke-width="1"/>
<path d="M8 20.8H29" stroke="#6a6a6a" stroke-width="1.7"/>
<path d="M32 20.4L43.4 9.2" stroke="#666666" stroke-width="3.8" stroke-linecap="round"/>
</svg>
<div class="t" style="top:728.36px;font-size:18px;line-height:18px;color:#000;white-space:pre;right:39.5px;letter-spacing:0.280px;"># Scans On Graph</div>
<svg style="left:1273px;top:747.5px" width="12" height="28" viewBox="0 0 12 28"><path d="M1 9.4L6.0 0.4L11 9.4M1 17.1L6.0 26.5L11 17.1" fill="none" stroke="#6e6e6e" stroke-width="1.1"/></svg>
<div style="left:1290px;top:750px;width:65px;height:24px;background:#fcfcfc;"></div>
<div class="t" style="top:752.56px;font-size:18px;line-height:18px;color:#000;white-space:pre;left:1294px;">1000</div>
<div style="left:1249.5px;top:781px;width:105.5px;height:472.5px;background:#000;"></div>
<div style="left:1248.5px;top:780.5px;width:107.0px;height:1px;background:#808080;"></div>
<div style="left:1248.5px;top:780.5px;width:1px;height:473px;background:#808080;"></div>
<div style="left:1355.0px;top:781px;width:1px;height:473px;background:#e4e4e4;"></div>
<div style="left:1248.5px;top:1253.5px;width:107.5px;height:1px;background:#e4e4e4;"></div>
<div class="t" style="top:784.02px;font-size:16.4px;line-height:16.4px;color:#000;white-space:pre;left:1184px;">Plot 0</div>
<div class="t" style="top:814.05px;font-size:16.4px;line-height:16.4px;color:#000;white-space:pre;left:1184px;">Plot 1</div>
<div class="t" style="top:844.08px;font-size:16.4px;line-height:16.4px;color:#000;white-space:pre;left:1184px;">Plot 2</div>
<div class="t" style="top:874.11px;font-size:16.4px;line-height:16.4px;color:#000;white-space:pre;left:1184px;">Plot 3</div>
<div class="t" style="top:904.14px;font-size:16.4px;line-height:16.4px;color:#000;white-space:pre;left:1184px;">Plot 4</div>
<div class="t" style="top:934.17px;font-size:16.4px;line-height:16.4px;color:#000;white-space:pre;left:1184px;">Plot 5</div>
<div class="t" style="top:964.20px;font-size:16.4px;line-height:16.4px;color:#000;white-space:pre;left:1184px;">Plot 6</div>
<div class="t" style="top:994.23px;font-size:16.4px;line-height:16.4px;color:#000;white-space:pre;left:1184px;">Plot 7</div>
<div class="t" style="top:1024.26px;font-size:16.4px;line-height:16.4px;color:#000;white-space:pre;left:1184px;">Plot 8</div>
<div class="t" style="top:1054.29px;font-size:16.4px;line-height:16.4px;color:#000;white-space:pre;left:1184px;">Plot 9</div>
<div class="t" style="top:1084.32px;font-size:16.4px;line-height:16.4px;color:#000;white-space:pre;left:1184px;">Plot 10</div>
<div class="t" style="top:1114.35px;font-size:16.4px;line-height:16.4px;color:#000;white-space:pre;left:1184px;">Plot 11</div>
<div class="t" style="top:1144.38px;font-size:16.4px;line-height:16.4px;color:#000;white-space:pre;left:1184px;">Plot 12</div>
<div class="t" style="top:1174.41px;font-size:16.4px;line-height:16.4px;color:#000;white-space:pre;left:1184px;">Plot 13</div>
<div class="t" style="top:1204.44px;font-size:16.4px;line-height:16.4px;color:#000;white-space:pre;left:1184px;">Plot 14</div>
<div class="t" style="top:1234.47px;font-size:16.4px;line-height:16.4px;color:#000;white-space:pre;left:1184px;">Plot 15</div>
<svg style="left:1249.5px;top:781px" width="105.5" height="474" viewBox="0 0 105.5 474"><polyline points="2.1 18.2 14.6 3.4 27.1 18.2 39.7 3.4 52.2 18.2 64.7 3.4 77.2 18.2 89.7 3.4 102.3 18.2" fill="none" stroke="#d8d8d8" stroke-width="1.1"/><polyline points="2.1 48.2 14.6 33.4 27.1 48.2 39.7 33.4 52.2 48.2 64.7 33.4 77.2 48.2 89.7 33.4 102.3 48.2" fill="none" stroke="#d04040" stroke-width="1.1"/><polyline points="2.1 78.3 14.6 63.5 27.1 78.3 39.7 63.5 52.2 78.3 64.7 63.5 77.2 78.3 89.7 63.5 102.3 78.3" fill="none" stroke="#10c810" stroke-width="1.1"/><polyline points="2.1 108.3 14.6 93.5 27.1 108.3 39.7 93.5 52.2 108.3 64.7 93.5 77.2 108.3 89.7 93.5 102.3 108.3" fill="none" stroke="#3c9cd8" stroke-width="1.1"/><polyline points="2.1 138.3 14.6 123.5 27.1 138.3 39.7 123.5 52.2 138.3 64.7 123.5 77.2 138.3 89.7 123.5 102.3 138.3" fill="none" stroke="#b4cc50" stroke-width="1.1"/><polyline points="2.1 168.3 14.6 153.5 27.1 168.3 39.7 153.5 52.2 168.3 64.7 153.5 77.2 168.3 89.7 153.5 102.3 168.3" fill="none" stroke="#b040d0" stroke-width="1.1"/><polyline points="2.1 198.4 14.6 183.6 27.1 198.4 39.7 183.6 52.2 198.4 64.7 183.6 77.2 198.4 89.7 183.6 102.3 198.4" fill="none" stroke="#d09020" stroke-width="1.1"/><polyline points="2.1 228.4 14.6 213.6 27.1 228.4 39.7 213.6 52.2 228.4 64.7 213.6 77.2 228.4 89.7 213.6 102.3 228.4" fill="none" stroke="#3c3cd8" stroke-width="1.1"/><polyline points="2.1 258.4 14.6 243.6 27.1 258.4 39.7 243.6 52.2 258.4 64.7 243.6 77.2 258.4 89.7 243.6 102.3 258.4" fill="none" stroke="#d040a0" stroke-width="1.1"/><polyline points="2.1 288.5 14.6 273.7 27.1 288.5 39.7 273.7 52.2 288.5 64.7 273.7 77.2 288.5 89.7 273.7 102.3 288.5" fill="none" stroke="#40c0c0" stroke-width="1.1"/><polyline points="2.1 318.5 14.6 303.7 27.1 318.5 39.7 303.7 52.2 318.5 64.7 303.7 77.2 318.5 89.7 303.7 102.3 318.5" fill="none" stroke="#d8d8d8" stroke-width="1.1"/><polyline points="2.1 348.5 14.6 333.7 27.1 348.5 39.7 333.7 52.2 348.5 64.7 333.7 77.2 348.5 89.7 333.7 102.3 348.5" fill="none" stroke="#d04040" stroke-width="1.1"/><polyline points="2.1 378.6 14.6 363.8 27.1 378.6 39.7 363.8 52.2 378.6 64.7 363.8 77.2 378.6 89.7 363.8 102.3 378.6" fill="none" stroke="#10c810" stroke-width="1.1"/><polyline points="2.1 408.6 14.6 393.8 27.1 408.6 39.7 393.8 52.2 408.6 64.7 393.8 77.2 408.6 89.7 393.8 102.3 408.6" fill="none" stroke="#3c9cd8" stroke-width="1.1"/><polyline points="2.1 438.6 14.6 423.8 27.1 438.6 39.7 423.8 52.2 438.6 64.7 423.8 77.2 438.6 89.7 423.8 102.3 438.6" fill="none" stroke="#b4cc50" stroke-width="1.1"/><polyline points="2.1 467.6 12.1 454.9 22.1 467.6 32.2 454.9 42.2 467.6 52.2 454.9 62.2 467.6 72.2 454.9 82.3 467.6 92.3 454.9 102.3 467.6" fill="none" stroke="#b040d0" stroke-width="1.5"/></svg>
<svg style="left:1380.6px;top:41.1px" width="16" height="16"><path d="M4.2 10.4L8 5.6L11.8 10.4" fill="none" stroke="#5c5c5c" stroke-width="2.6"/></svg>
<svg style="left:1380.5px;top:1243.7px" width="16" height="16"><path d="M4.2 5.6L8 10.4L11.8 5.6" fill="none" stroke="#5c5c5c" stroke-width="2.6"/></svg>
<svg style="left:0.2px;top:1263.1px" width="16" height="16"><path d="M10.4 4.2L5.6 8L10.4 11.8" fill="none" stroke="#5c5c5c" stroke-width="2.6"/></svg>
<svg style="left:1360.8px;top:1263.1px" width="16" height="16"><path d="M5.6 4.2L10.4 8L5.6 11.8" fill="none" stroke="#5c5c5c" stroke-width="2.6"/></svg>
<svg style="left:1115.5px;top:647.5px" width="16" height="16"><path d="M4.2 10.4L8 5.6L11.8 10.4" fill="none" stroke="#5c5c5c" stroke-width="2.6"/></svg>
<svg style="left:1115.5px;top:743.3px" width="16" height="16"><path d="M4.2 5.6L8 10.4L11.8 5.6" fill="none" stroke="#5c5c5c" stroke-width="2.6"/></svg>
<div style="left:79px;top:793px;width:1072px;height:410px;background:#000;"></div>
<div style="left:79px;top:793px;width:1072px;height:1px;background:#707070;"></div>
<div style="left:79px;top:793px;width:1px;height:410px;background:#707070;"></div>
<div style="left:79px;top:1202px;width:1073px;height:1.4px;background:#e8e8e8;"></div>
<div style="left:1150px;top:793px;width:2px;height:410.4px;background:#cacaca;"></div>
<svg style="left:80px;top:794px" width="1070" height="408" viewBox="80 794 1070 408"><path d="M93.5 794V1202M104.5 794V1202M116.5 794V1202M139.5 794V1202M151.5 794V1202M162.5 794V1202M186.5 794V1202M197.5 794V1202M209.5 794V1202M232.5 794V1202M244.5 794V1202M255.5 794V1202M278.5 794V1202M290.5 794V1202M302.5 794V1202M325.5 794V1202M337.5 794V1202M348.5 794V1202M371.5 794V1202M383.5 794V1202M395.5 794V1202M418.5 794V1202M429.5 794V1202M441.5 794V1202M464.5 794V1202M476.5 794V1202M488.5 794V1202M511.5 794V1202M522.5 794V1202M534.5 794V1202M557.5 794V1202M569.5 794V1202M580.5 794V1202M604.5 794V1202M615.5 794V1202M627.5 794V1202M650.5 794V1202M662.5 794V1202M673.5 794V1202M697.5 794V1202M708.5 794V1202M720.5 794V1202M743.5 794V1202M755.5 794V1202M766.5 794V1202M790.5 794V1202M801.5 794V1202M813.5 794V1202M836.5 794V1202M848.5 794V1202M859.5 794V1202M882.5 794V1202M894.5 794V1202M906.5 794V1202M929.5 794V1202M941.5 794V1202M952.5 794V1202M975.5 794V1202M987.5 794V1202M999.5 794V1202M1022.5 794V1202M1033.5 794V1202M1045.5 794V1202M1068.5 794V1202M1080.5 794V1202M1092.5 794V1202M1115.5 794V1202M1126.5 794V1202M1138.5 794V1202M80 803.5H1150M80 811.5H1150M80 819.5H1150M80 827.5H1150M80 844.5H1150M80 852.5H1150M80 860.5H1150M80 868.5H1150M80 884.5H1150M80 892.5H1150M80 900.5H1150M80 909.5H1150M80 925.5H1150M80 933.5H1150M80 941.5H1150M80 949.5H1150M80 965.5H1150M80 974.5H1150M80 982.5H1150M80 990.5H1150M80 1006.5H1150M80 1014.5H1150M80 1022.5H1150M80 1030.5H1150M80 1047.5H1150M80 1055.5H1150M80 1063.5H1150M80 1071.5H1150M80 1087.5H1150M80 1095.5H1150M80 1103.5H1150M80 1112.5H1150M80 1128.5H1150M80 1136.5H1150M80 1144.5H1150M80 1152.5H1150M80 1168.5H1150M80 1177.5H1150M80 1185.5H1150M80 1193.5H1150" stroke="#003100" stroke-width="1" fill="none"/><path d="M127.5 794V1202M174.5 794V1202M220.5 794V1202M267.5 794V1202M313.5 794V1202M360.5 794V1202M406.5 794V1202M453.5 794V1202M499.5 794V1202M546.5 794V1202M592.5 794V1202M639.5 794V1202M685.5 794V1202M731.5 794V1202M778.5 794V1202M824.5 794V1202M871.5 794V1202M917.5 794V1202M964.5 794V1202M1010.5 794V1202M1057.5 794V1202M1103.5 794V1202M1150.5 794V1202M80 836.5H1150M80 876.5H1150M80 917.5H1150M80 957.5H1150M80 998.5H1150M80 1038.5H1150M80 1079.5H1150M80 1120.5H1150M80 1160.5H1150" stroke="#006600" stroke-width="1" fill="none"/><polyline points="81.0 1083.2 92.6 1197.2 104.2 1097.0 115.8 1091.3 127.5 1088.8 139.1 1088.5 150.7 1088.5 162.3 1088.5 173.9 1087.5 185.5 1087.5 197.2 1088.5 208.8 1088.5 220.4 1087.5 232.0 1088.5 243.6 1087.5 255.2 1087.5 266.8 1087.5 278.5 1087.5 290.1 1087.5 301.7 1087.5 313.3 1087.5 324.9 1087.5 336.5 1087.5 348.1 1087.5 359.8 1087.5 371.4 1087.5 383.0 1087.5 394.6 1088.5 406.2 1087.5 417.8 1088.5 429.5 1087.5 441.1 1087.5 452.7 1087.5 464.3 1087.5 475.9 1088.5 487.5 1087.5 499.1 1087.5 510.8 1087.5 522.4 1087.5 534.0 1086.0 545.6 1087.5 557.2 1087.5 568.8 1087.5 580.5 1087.5 592.1 1088.5 603.7 1087.5 615.3 1088.5 626.9 1087.5 638.5 1087.5 650.1 1087.5 661.8 1087.5 673.4 1087.5 685.0 1087.5 696.6 1087.5 708.2 1087.5 719.8 1087.5 731.5 1088.5 743.1 1087.5 754.7 1087.5 766.3 1087.5 777.9 1087.5 789.5 1087.5 801.1 1087.5 812.8 1087.5 824.4 1087.5 836.0 1087.5 847.6 1087.5 859.2 1087.5 870.8 1087.5 882.4 1087.5 894.1 1087.5 905.7 1087.5 917.3 1087.5 928.9 1087.5 940.5 1087.5 952.1 1087.5 963.8 1087.5 975.4 1087.5 987.0 1087.5 998.6 1087.5 1010.2 1087.5 1021.8 1087.5 1033.4 1087.5 1045.1 1087.5 1056.7 1087.5 1068.3 1086.0 1079.9 1087.5 1091.5 1087.5 1103.1 1087.5 1114.8 1087.5 1126.4 1087.5 1138.0 1087.5" fill="none" stroke="#3ca8e8" stroke-width="1.25" stroke-linejoin="round"/><polyline points="81.0 1043.4 92.6 1151.4 95.5 1131.9 98.4 1111.3 101.3 1093.1 104.2 1080.7 107.1 1073.2 110.0 1067.0 112.9 1062.3 115.8 1059.3 118.7 1057.3 121.7 1055.8 124.6 1054.7 127.5 1053.9 130.4 1053.4 133.3 1052.9 136.2 1052.6 139.1 1052.5 142.0 1052.5 144.9 1052.5 147.8 1052.5 150.7 1052.5 153.6 1052.5 156.5 1052.5 159.4 1052.5 162.3 1052.5 162.3 1052.5 173.9 1052.5 185.5 1052.5 197.2 1052.5 208.8 1052.5 220.4 1052.5 232.0 1052.5 243.6 1052.5 255.2 1052.5 266.8 1052.5 278.5 1052.5 290.1 1052.5 301.7 1052.5 313.3 1052.5 324.9 1052.5 336.5 1052.5 348.1 1052.5 359.8 1052.5 371.4 1052.5 383.0 1052.5 394.6 1052.5 406.2 1052.5 417.8 1052.5 429.5 1052.5 441.1 1052.5 452.7 1052.5 464.3 1052.5 475.9 1052.5 487.5 1052.5 499.1 1052.5 510.8 1051.3 522.4 1052.5 534.0 1048.8 545.6 1052.5 557.2 1052.5 568.8 1052.5 580.5 1050.2 592.1 1052.5 603.7 1052.5 615.3 1052.5 626.9 1052.5 638.5 1052.5 650.1 1052.5 661.8 1052.5 673.4 1052.5 685.0 1052.5 696.6 1052.5 708.2 1052.5 719.8 1052.5 731.5 1052.5 743.1 1052.5 754.7 1052.5 766.3 1052.5 777.9 1052.5 789.5 1052.5 801.1 1052.5 812.8 1052.5 824.4 1052.5 836.0 1052.5 847.6 1052.5 859.2 1051.3 870.8 1052.5 882.4 1052.5 894.1 1052.5 905.7 1052.5 917.3 1052.5 928.9 1052.5 940.5 1051.3 952.1 1052.5 963.8 1051.3 975.4 1052.5 987.0 1052.5 998.6 1052.5 1010.2 1052.5 1021.8 1052.5 1033.4 1052.5 1045.1 1052.5 1056.7 1052.5 1068.3 1051.3 1079.9 1052.5 1091.5 1052.5 1103.1 1052.5 1114.8 1052.5 1126.4 1052.5 1138.0 1052.5" fill="none" stroke="#10e010" stroke-width="1.25" stroke-linejoin="round"/><polyline points="81.0 927.3 92.6 927.3 104.2 927.4 115.8 929.9 127.5 930.2 139.1 930.2 150.7 930.2 162.3 930.2 173.9 930.2 185.5 930.2 197.2 930.2 208.8 930.2 220.4 930.2 232.0 930.2 243.6 930.2 255.2 930.2 266.8 930.2 278.5 930.2 290.1 930.2 301.7 930.2 313.3 930.2 324.9 930.2 336.5 930.2 348.1 930.2 359.8 930.2 371.4 930.2 383.0 930.2 394.6 930.2 406.2 930.2 417.8 930.2 429.5 930.2 441.1 930.2 452.7 930.2 464.3 930.2 475.9 930.2 487.5 930.2 499.1 930.2 510.8 930.2 522.4 930.2 534.0 928.7 545.6 930.2 557.2 930.2 568.8 930.2 580.5 930.2 592.1 930.2 603.7 930.2 615.3 930.2 626.9 930.2 638.5 930.2 650.1 930.2 661.8 930.2 673.4 930.2 685.0 930.2 696.6 930.2 708.2 930.2 719.8 930.2 731.5 930.2 743.1 930.2 754.7 930.2 766.3 930.2 777.9 930.2 789.5 930.2 801.1 930.2 812.8 930.2 824.4 930.2 836.0 930.2 847.6 930.2 859.2 930.2 870.8 930.2 882.4 930.2 894.1 930.2 905.7 930.2 917.3 930.2 928.9 930.2 940.5 930.2 952.1 930.2 963.8 930.2 975.4 930.2 987.0 930.2 998.6 930.2 1010.2 930.2 1021.8 930.2 1033.4 930.2 1045.1 930.2 1056.7 930.2 1068.3 930.2 1079.9 930.2 1091.5 930.2 1103.1 930.2 1114.8 930.2 1126.4 930.2 1138.0 930.2" fill="none" stroke="#e03c3c" stroke-width="1.25" stroke-linejoin="round"/><polyline points="81.0 803.8 92.6 1148.1 95.5 1065.7 98.4 976.2 101.3 900.9 104.2 860.7 107.1 847.1 110.0 837.1 112.9 830.1 115.8 825.8 118.7 822.7 121.7 820.3 124.6 818.6 127.5 817.6 130.4 817.2 133.3 817.0 136.2 816.7 139.1 816.5 142.0 816.2 144.9 815.9 147.8 815.6 150.7 815.5 153.6 815.5 156.5 815.5 159.4 815.5 162.3 815.5 162.3 815.5 173.9 815.5 185.5 816.5 197.2 816.5 208.8 816.5 220.4 816.5 232.0 816.5 243.6 816.5 255.2 816.5 266.8 816.5 278.5 815.5 290.1 815.5 301.7 816.5 313.3 815.5 324.9 816.5 336.5 815.5 348.1 815.5 359.8 816.5 371.4 816.5 383.0 816.5 394.6 816.5 406.2 816.5 417.8 815.5 429.5 816.5 441.1 816.5 452.7 816.5 464.3 815.5 475.9 816.5 487.5 816.5 499.1 815.5 510.8 815.5 522.4 815.5 534.0 810.5 545.6 816.5 557.2 816.5 568.8 815.5 580.5 811.9 592.1 815.5 603.7 815.5 615.3 816.5 626.9 816.5 638.5 815.5 650.1 815.5 661.8 815.5 673.4 815.5 685.0 815.5 696.6 815.5 708.2 815.5 719.8 815.5 731.5 815.5 743.1 815.5 754.7 815.5 766.3 815.5 777.9 816.5 789.5 815.5 801.1 815.5 812.8 816.5 824.4 816.5 836.0 816.5 847.6 816.5 859.2 815.5 870.8 815.5 882.4 815.5 894.1 816.5 905.7 816.5 917.3 815.5 928.9 815.5 940.5 815.5 952.1 816.5 963.8 816.5 975.4 815.5 987.0 816.5 998.6 815.5 1010.2 815.5 1021.8 815.5 1033.4 815.5 1045.1 815.5 1056.7 815.5 1068.3 815.5 1079.9 816.5 1091.5 816.5 1103.1 815.5 1114.8 815.5 1126.4 815.5 1138.0 815.5" fill="none" stroke="#f4f4f4" stroke-width="1.25" stroke-linejoin="round"/></svg>
<div style="left:72.3px;top:794.35px;width:5.7px;height:1.45px;background:#202020;"></div>
<div class="t" style="top:787.26px;font-size:18px;line-height:18px;color:#000;white-space:pre;right:1328.5px;">6.5</div>
<div style="left:72.3px;top:834.95px;width:5.7px;height:1.45px;background:#202020;"></div>
<div class="t" style="top:827.86px;font-size:18px;line-height:18px;color:#000;white-space:pre;right:1328.5px;">6</div>
<div style="left:72.3px;top:875.5500000000001px;width:5.7px;height:1.45px;background:#202020;"></div>
<div class="t" style="top:868.46px;font-size:18px;line-height:18px;color:#000;white-space:pre;right:1328.5px;">5.5</div>
<div style="left:72.3px;top:916.1500000000001px;width:5.7px;height:1.45px;background:#202020;"></div>
<div class="t" style="top:909.06px;font-size:18px;line-height:18px;color:#000;white-space:pre;right:1328.5px;">5</div>
<div style="left:72.3px;top:956.75px;width:5.7px;height:1.45px;background:#202020;"></div>
<div class="t" style="top:949.66px;font-size:18px;line-height:18px;color:#000;white-space:pre;right:1328.5px;">4.5</div>
<div style="left:72.3px;top:997.3500000000001px;width:5.7px;height:1.45px;background:#202020;"></div>
<div class="t" style="top:990.26px;font-size:18px;line-height:18px;color:#000;white-space:pre;right:1328.5px;">4</div>
<div style="left:72.3px;top:1037.95px;width:5.7px;height:1.45px;background:#202020;"></div>
<div class="t" style="top:1030.86px;font-size:18px;line-height:18px;color:#000;white-space:pre;right:1328.5px;">3.5</div>
<div style="left:72.3px;top:1078.55px;width:5.7px;height:1.45px;background:#202020;"></div>
<div class="t" style="top:1071.46px;font-size:18px;line-height:18px;color:#000;white-space:pre;right:1328.5px;">3</div>
<div style="left:72.3px;top:1119.15px;width:5.7px;height:1.45px;background:#202020;"></div>
<div class="t" style="top:1112.06px;font-size:18px;line-height:18px;color:#000;white-space:pre;right:1328.5px;">2.5</div>
<div style="left:72.3px;top:1159.7500000000002px;width:5.7px;height:1.45px;background:#202020;"></div>
<div class="t" style="top:1152.66px;font-size:18px;line-height:18px;color:#000;white-space:pre;right:1328.5px;">2</div>
<div style="left:72.3px;top:1200.3500000000001px;width:5.7px;height:1.45px;background:#202020;"></div>
<div class="t" style="top:1193.26px;font-size:18px;line-height:18px;color:#000;white-space:pre;right:1328.5px;">1.5</div>
<div style="left:81px;top:1204.3px;width:1.45px;height:6.3px;background:#202020;"></div>
<div class="t" style="top:1212.66px;font-size:18px;line-height:18px;color:#000;white-space:pre;left:-119.0px;width:400px;text-align:center;">0</div>
<div style="left:127px;top:1204.3px;width:1.45px;height:6.3px;background:#202020;"></div>
<div class="t" style="top:1212.66px;font-size:18px;line-height:18px;color:#000;white-space:pre;left:-72.5391304347826px;width:400px;text-align:center;">2</div>
<div style="left:173px;top:1204.3px;width:1.45px;height:6.3px;background:#202020;"></div>
<div class="t" style="top:1212.66px;font-size:18px;line-height:18px;color:#000;white-space:pre;left:-26.078260869565213px;width:400px;text-align:center;">4</div>
<div style="left:220px;top:1204.3px;width:1.45px;height:6.3px;background:#202020;"></div>
<div class="t" style="top:1212.66px;font-size:18px;line-height:18px;color:#000;white-space:pre;left:20.382608695652152px;width:400px;text-align:center;">6</div>
<div style="left:266px;top:1204.3px;width:1.45px;height:6.3px;background:#202020;"></div>
<div class="t" style="top:1212.66px;font-size:18px;line-height:18px;color:#000;white-space:pre;left:66.84347826086957px;width:400px;text-align:center;">8</div>
<div style="left:313px;top:1204.3px;width:1.45px;height:6.3px;background:#202020;"></div>
<div class="t" style="top:1212.66px;font-size:18px;line-height:18px;color:#000;white-space:pre;left:113.30434782608694px;width:400px;text-align:center;">10</div>
<div style="left:359px;top:1204.3px;width:1.45px;height:6.3px;background:#202020;"></div>
<div class="t" style="top:1212.66px;font-size:18px;line-height:18px;color:#000;white-space:pre;left:159.7652173913043px;width:400px;text-align:center;">12</div>
<div style="left:406px;top:1204.3px;width:1.45px;height:6.3px;background:#202020;"></div>
<div class="t" style="top:1212.66px;font-size:18px;line-height:18px;color:#000;white-space:pre;left:206.22608695652173px;width:400px;text-align:center;">14</div>
<div style="left:452px;top:1204.3px;width:1.45px;height:6.3px;background:#202020;"></div>
<div class="t" style="top:1212.66px;font-size:18px;line-height:18px;color:#000;white-space:pre;left:252.6869565217391px;width:400px;text-align:center;">16</div>
<div style="left:499px;top:1204.3px;width:1.45px;height:6.3px;background:#202020;"></div>
<div class="t" style="top:1212.66px;font-size:18px;line-height:18px;color:#000;white-space:pre;left:299.14782608695646px;width:400px;text-align:center;">18</div>
<div style="left:545px;top:1204.3px;width:1.45px;height:6.3px;background:#202020;"></div>
<div class="t" style="top:1212.66px;font-size:18px;line-height:18px;color:#000;white-space:pre;left:345.6086956521739px;width:400px;text-align:center;">20</div>
<div style="left:592px;top:1204.3px;width:1.45px;height:6.3px;background:#202020;"></div>
<div class="t" style="top:1212.66px;font-size:18px;line-height:18px;color:#000;white-space:pre;left:392.0695652173913px;width:400px;text-align:center;">22</div>
<div style="left:638px;top:1204.3px;width:1.45px;height:6.3px;background:#202020;"></div>
<div class="t" style="top:1212.66px;font-size:18px;line-height:18px;color:#000;white-space:pre;left:438.5304347826086px;width:400px;text-align:center;">24</div>
<div style="left:684px;top:1204.3px;width:1.45px;height:6.3px;background:#202020;"></div>
<div class="t" style="top:1212.66px;font-size:18px;line-height:18px;color:#000;white-space:pre;left:484.99130434782603px;width:400px;text-align:center;">26</div>
<div style="left:731px;top:1204.3px;width:1.45px;height:6.3px;background:#202020;"></div>
<div class="t" style="top:1212.66px;font-size:18px;line-height:18px;color:#000;white-space:pre;left:531.4521739130435px;width:400px;text-align:center;">28</div>
<div style="left:777px;top:1204.3px;width:1.45px;height:6.3px;background:#202020;"></div>
<div class="t" style="top:1212.66px;font-size:18px;line-height:18px;color:#000;white-space:pre;left:577.9130434782608px;width:400px;text-align:center;">30</div>
<div style="left:824px;top:1204.3px;width:1.45px;height:6.3px;background:#202020;"></div>
<div class="t" style="top:1212.66px;font-size:18px;line-height:18px;color:#000;white-space:pre;left:624.3739130434782px;width:400px;text-align:center;">32</div>
<div style="left:870px;top:1204.3px;width:1.45px;height:6.3px;background:#202020;"></div>
<div class="t" style="top:1212.66px;font-size:18px;line-height:18px;color:#000;white-space:pre;left:670.8347826086956px;width:400px;text-align:center;">34</div>
<div style="left:917px;top:1204.3px;width:1.45px;height:6.3px;background:#202020;"></div>
<div class="t" style="top:1212.66px;font-size:18px;line-height:18px;color:#000;white-space:pre;left:717.2956521739129px;width:400px;text-align:center;">36</div>
<div style="left:963px;top:1204.3px;width:1.45px;height:6.3px;background:#202020;"></div>
<div class="t" style="top:1212.66px;font-size:18px;line-height:18px;color:#000;white-space:pre;left:763.7565217391303px;width:400px;text-align:center;">38</div>
<div style="left:1010px;top:1204.3px;width:1.45px;height:6.3px;background:#202020;"></div>
<div class="t" style="top:1212.66px;font-size:18px;line-height:18px;color:#000;white-space:pre;left:810.2173913043478px;width:400px;text-align:center;">40</div>
<div style="left:1056px;top:1204.3px;width:1.45px;height:6.3px;background:#202020;"></div>
<div class="t" style="top:1212.66px;font-size:18px;line-height:18px;color:#000;white-space:pre;left:856.6782608695651px;width:400px;text-align:center;">42</div>
<div style="left:1103px;top:1204.3px;width:1.45px;height:6.3px;background:#202020;"></div>
<div class="t" style="top:1212.66px;font-size:18px;line-height:18px;color:#000;white-space:pre;left:903.1391304347826px;width:400px;text-align:center;">44</div>
<div style="left:1149px;top:1204.3px;width:1.45px;height:6.3px;background:#202020;"></div>
<div class="t" style="top:1212.66px;font-size:18px;line-height:18px;color:#000;white-space:pre;left:949.5999999999999px;width:400px;text-align:center;">46</div>
<div class="t" style="top:1237.39px;font-size:18.8px;line-height:18.8px;color:#000;white-space:pre;left:406.5px;width:400px;text-align:center;letter-spacing:0.250px;">Seconds</div>
<div class="t" style="left:-71px;top:991px;letter-spacing:0.1px;width:200px;height:18px;text-align:center;font-size:18px;line-height:18px;transform:rotate(-90deg);white-space:pre;">Amplitude -Scaled</div>
</body></html>
